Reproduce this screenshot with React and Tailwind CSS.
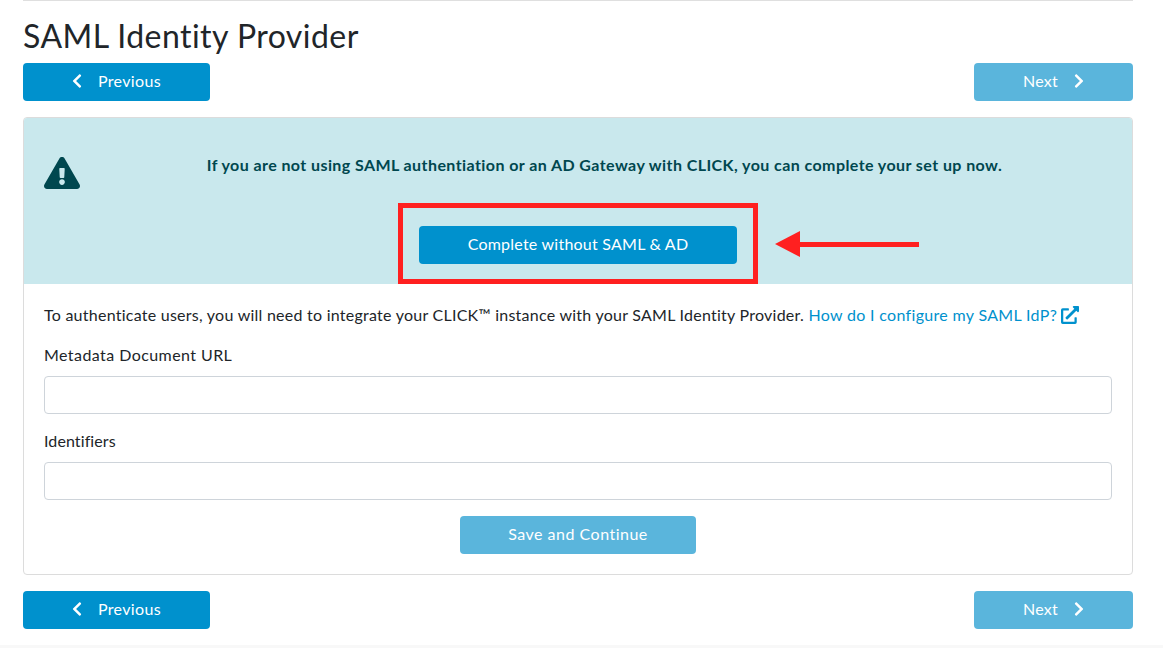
import { FaChevronLeft, FaChevronRight, FaExclamationTriangle, FaExternalLinkAlt } from 'react-icons/fa';

function NavButton({ dir }) {
  if (dir === 'prev') {
    return (
      <button className="h-[38px] w-[187px] rounded-[4px] bg-[#0091cd] text-white text-[16px] tracking-[0.37px] flex items-center justify-center gap-[13px] pb-[2px] pr-[3px]">
        <FaChevronLeft size={16} />
        <span>Previous</span>
      </button>
    );
  }
  return (
    <button className="h-[38px] w-[159px] rounded-[4px] bg-[#5ab5dc] text-white text-[16px] tracking-[0.2px] flex items-center justify-center gap-[13px] pb-[2px] pl-[3px]">
      <span>Next</span>
      <FaChevronRight size={16} />
    </button>
  );
}

function NavRow() {
  return (
    <div className="flex justify-between">
      <NavButton dir="prev" />
      <NavButton dir="next" />
    </div>
  );
}

export default function App() {
  return (
    <div className="h-[648px] w-[1163px] overflow-hidden bg-white font-['Lato','Open_Sans',sans-serif] text-[16px] text-[#212529]">
      <div className="mx-[23px] w-[1110px]">
        <div className="h-px bg-[#dfdfdf]" />
        <h1 className="mt-[15px] mb-[7px] h-[40px] text-[32px] leading-[40px] font-normal tracking-[0.46px]">SAML Identity Provider</h1>
        <NavRow />

        <div className="relative mt-4 h-[458px] rounded-[4px] border border-[#dcdcdc]">
          <div className="h-[166px] rounded-t-[3px] bg-[#c9e8ed] pl-5 text-[#00474f]">
            <div className="flex h-[85px] items-center pt-[24px]">
              <FaExclamationTriangle size={36} className="mr-[-36px] shrink-0" />
              <p className="mt-[-16px] w-full text-center font-bold tracking-[0.42px] pl-[33px]">
                If you are not using SAML authentiation or an AD Gateway with CLICK, you can complete your set up now.
              </p>
            </div>
          </div>

          {/* red annotation over the card */}
          <div className="absolute left-[374px] top-[85px] flex h-[81px] w-[360px] items-center justify-center border-[5px] border-[#ff2020] pt-[2px]">
            <button className="h-[38px] w-[318px] rounded-[4px] bg-[#0091cd] pb-[2px] text-white tracking-[0.23px]">Complete without SAML &amp; AD</button>
          </div>
          <svg className="absolute left-[751px] top-[113px]" width="144" height="26" viewBox="0 0 144 26">
            <path d="M0 13 L25 0 L25 26 Z" fill="#ff2020" />
            <rect x="24" y="11" width="120" height="5" fill="#ff2020" />
          </svg>

          <div className="px-5 pt-[20px]">
            <p className="h-[22px] leading-[22px] tracking-[0.25px]">
              To authenticate users, you will need to integrate your CLICK™ instance with your SAML Identity Provider.{' '}
              <a className="text-[#0091cd] tracking-[0.32px]">
                How do I configure my SAML IdP?
                <FaExternalLinkAlt size={18} className="ml-[4px] inline align-[-3px]" />
              </a>
            </p>
            <label className="mt-[18px] block h-[22px] leading-[22px] tracking-[0.43px]">Metadata Document URL</label>
            <input className="mt-[10px] block h-[38px] w-full rounded-[4px] border border-[#ced4da] bg-white" />
            <label className="mt-[16px] block h-[22px] leading-[22px] tracking-[0.1px]">Identifiers</label>
            <input className="mt-[10px] block h-[38px] w-full rounded-[4px] border border-[#ced4da] bg-white" />
            <div className="mt-4 flex justify-center">
              <button className="h-[38px] w-[236px] rounded-[4px] bg-[#5ab5dc] pb-[2px] text-white tracking-[0.5px]">Save and Continue</button>
            </div>
          </div>
        </div>

        <div className="mt-4">
          <NavRow />
        </div>
      </div>
      <div className="mt-4 h-1 bg-[#f8f8f8]" />
    </div>
  );
}
